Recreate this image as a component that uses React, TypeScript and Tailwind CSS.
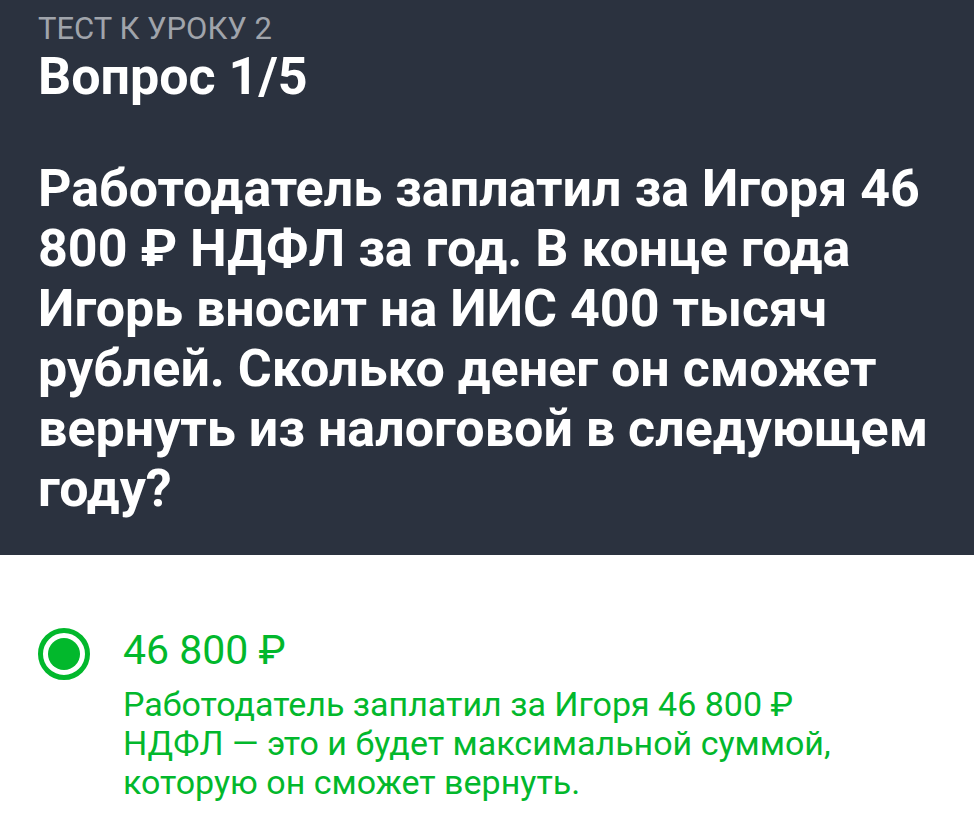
import { type FC, useState } from "react"

type Answer = {
  id: string
  title: string
  explanation: string
}

const answers: Answer[] = [
  {
    id: "answer-1",
    title: "46 800 ₽",
    explanation:
      "Работодатель заплатил за Игоря 46 800 ₽ НДФЛ — это и будет максимальной суммой, которую он сможет вернуть.",
  },
]

const QuestionHeader: FC = () => (
  <header className="bg-[#2b323f] px-[38px] pt-[13px] pb-9 text-white">
    <p className="text-[31px] leading-8 text-[#a0a4ab]">ТЕСТ К УРОКУ 2</p>
    <p className="mt-[2px] text-[52px] leading-[60px] font-bold">Вопрос 1/5</p>
    <h1 className="mt-[52px] text-[52px] leading-[60px] font-bold">
      Работодатель заплатил за Игоря 46 800 ₽ НДФЛ за год. В конце года Игорь вносит на ИИС 400 тысяч рублей.
      Сколько денег он сможет вернуть из налоговой в следующем году?
    </h1>
  </header>
)

const App: FC = () => {
  const [selected, setSelected] = useState("answer-1")

  return (
    <div className="min-h-screen bg-white font-[Roboto,sans-serif]">
      <QuestionHeader />

      <main className="px-[38px] pt-[73px] pb-6">
        {answers.map((answer) => (
          <div key={answer.id} className="flex items-start gap-[33px] text-[#02b82c]">
            <input
              id={answer.id}
              type="radio"
              name="answer"
              checked={selected === answer.id}
              onChange={() => setSelected(answer.id)}
              className="h-[52px] w-[52px] shrink-0 appearance-none rounded-full border-5 border-[#02b82c] bg-clip-content p-[5px] checked:bg-[#02b82c]"
            />
            <label htmlFor={answer.id} className="flex-1">
              <span className="block text-[41px] leading-[45px]">{answer.title}</span>
              <span className="mt-3 block max-w-[740px] text-[34px] leading-[39px]">{answer.explanation}</span>
            </label>
          </div>
        ))}
      </main>
    </div>
  )
}

export default App
